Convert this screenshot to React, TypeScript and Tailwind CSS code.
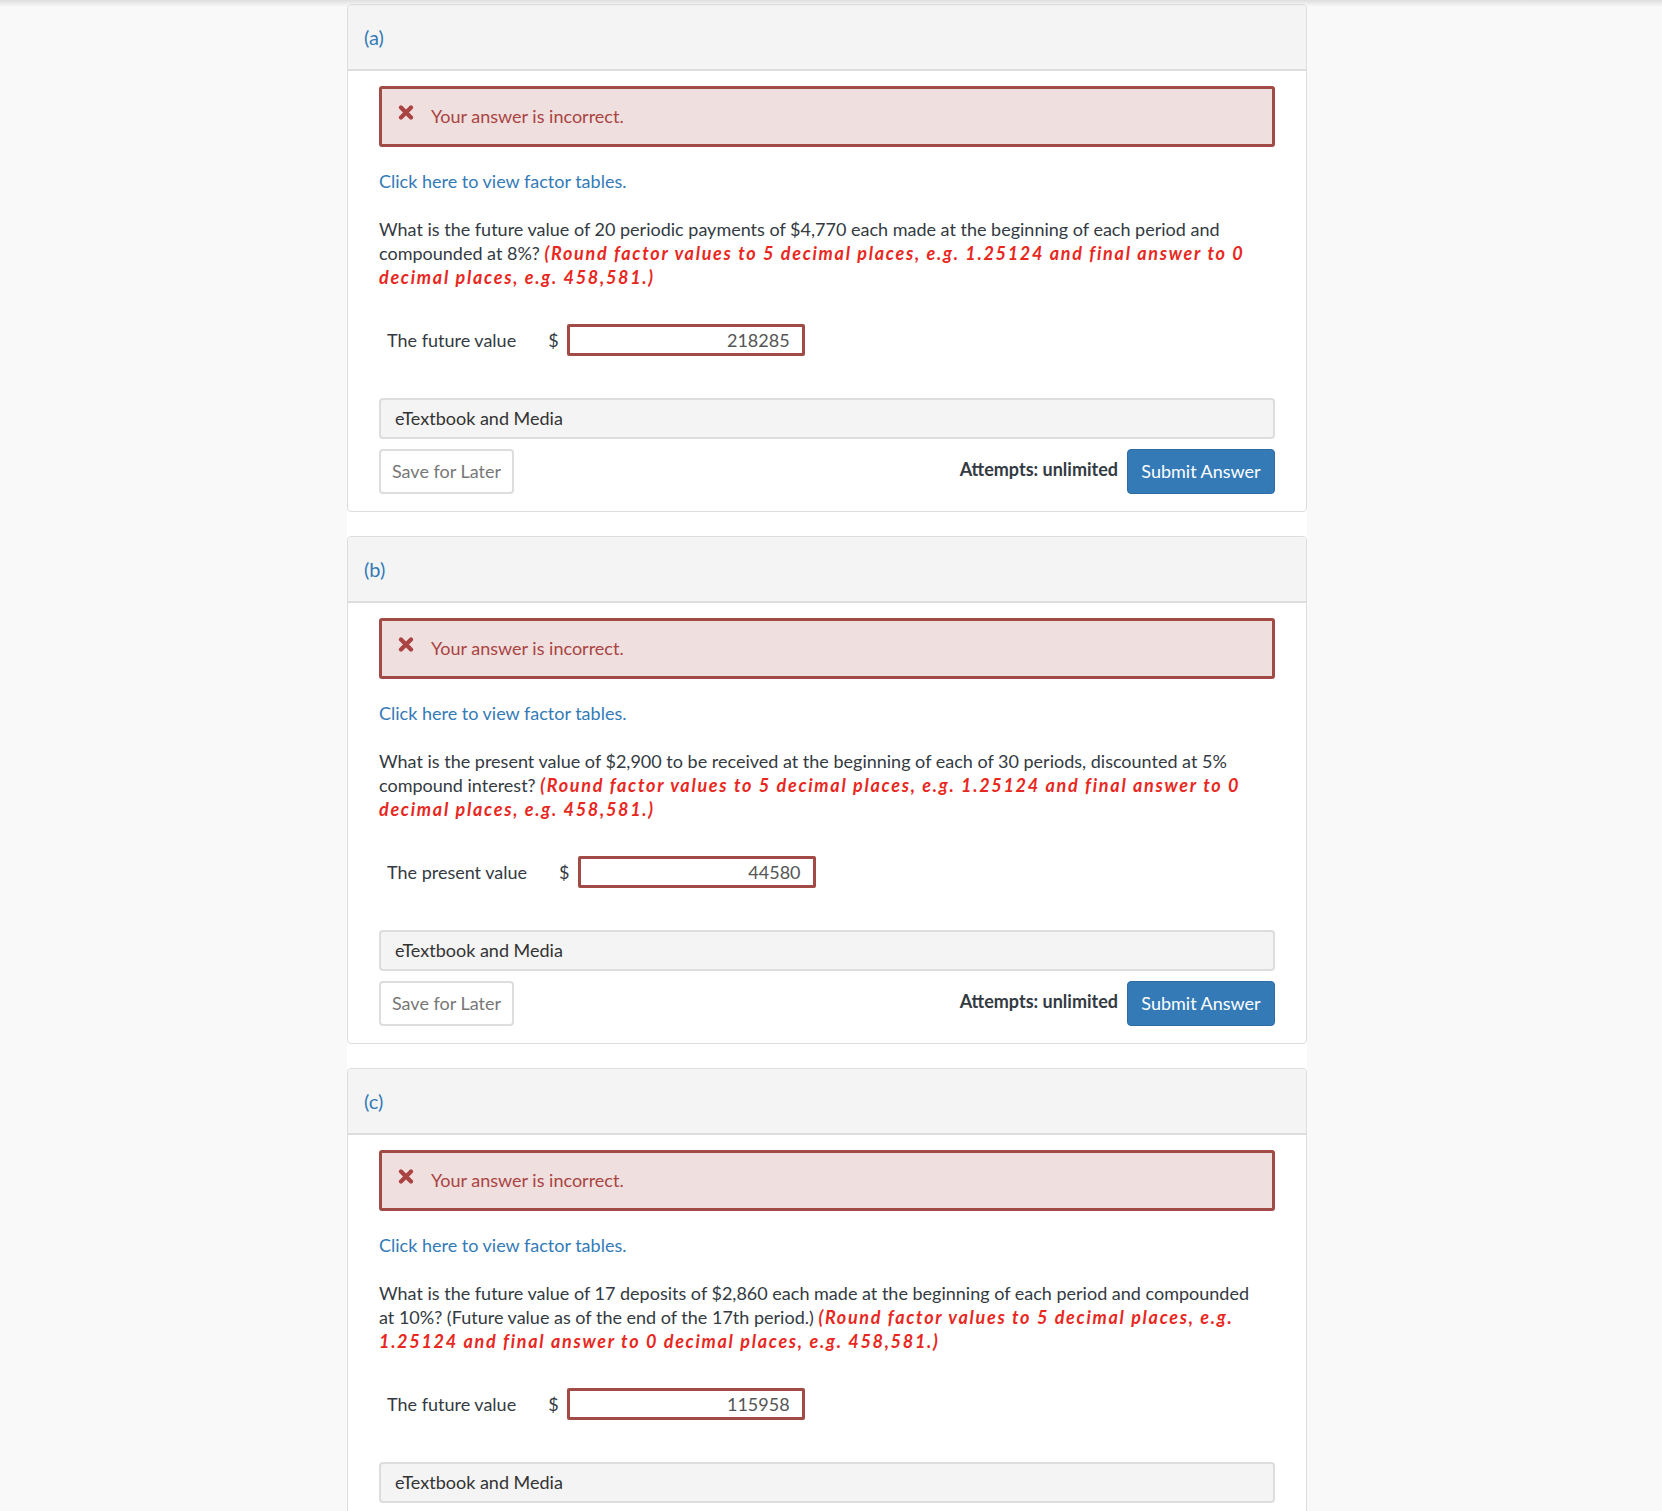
import React from "react";

type Part = {
    label: string;
    question: string;
    hint: string;
    answerLabel: string;
    value: string;
};

const parts: Part[] = [
    {
        label: "(a)",
        question:
            "What is the future value of 20 periodic payments of $4,770 each made at the beginning of each period and compounded at 8%?",
        hint: "(Round factor values to 5 decimal places, e.g. 1.25124 and final answer to 0 decimal places, e.g. 458,581.)",
        answerLabel: "The future value",
        value: "218285",
    },
    {
        label: "(b)",
        question:
            "What is the present value of $2,900 to be received at the beginning of each of 30 periods, discounted at 5% compound interest?",
        hint: "(Round factor values to 5 decimal places, e.g. 1.25124 and final answer to 0 decimal places, e.g. 458,581.)",
        answerLabel: "The present value",
        value: "44580",
    },
    {
        label: "(c)",
        question:
            "What is the future value of 17 deposits of $2,860 each made at the beginning of each period and compounded at 10%? (Future value as of the end of the 17th period.)",
        hint: "(Round factor values to 5 decimal places, e.g. 1.25124 and final answer to 0 decimal places, e.g. 458,581.)",
        answerLabel: "The future value",
        value: "115958",
    },
];

function CrossIcon() {
    return (
        <svg width="16" height="15" viewBox="0 0 16 15" className="shrink-0">
            <path d="M3 2.5 L13 12.5 M13 2.5 L3 12.5" stroke="#a94442" strokeWidth="4.2" strokeLinecap="round"/>
        </svg>
    );
}

function PartCard({part}: { part: Part }) {
    return (
        <div className="w-[960px] bg-white border border-[#dddddd] rounded-[4px]">
            {/* header */}
            <div className="h-[66px] bg-[#f4f4f4] border-b-2 border-[#dddddd] rounded-t-[4px] flex items-center pl-[16px]">
                <span className="text-[20px] text-[#337ab7]">{part.label}</span>
            </div>

            <div className="px-[31px] pt-[15px] pb-[17px]">
                {/* feedback */}
                <div className="h-[61px] bg-[#f0dfdf] border-[3px] border-[#a24a45] rounded-[3px] flex items-center pl-[16px] gap-[17px]">
                    <div className="-mt-[8px]">
                        <CrossIcon/>
                    </div>
                    <span className="text-[18px] text-[#a94442]">Your answer is incorrect.</span>
                </div>

                <div className="mt-[22px] leading-[24px] text-[18px] text-[#337ab7]">
                    Click here to view factor tables.
                </div>

                <p className="mt-[24px] w-[872px] text-[18px] leading-[24px] text-[#333a42]">
                    {part.question}{" "}
                    <span className="font-bold italic text-[#e8281e] tracking-[1.7px]">{part.hint}</span>
                </p>

                {/* answer */}
                <div className="mt-[35px] flex items-center pl-[8px] text-[18px] text-[#333a42]">
                    <span>{part.answerLabel}</span>
                    <span className="ml-[32px]">$</span>
                    <div className="ml-[8px] w-[238px] h-[32px] border-[3px] border-[#a24a45] rounded-[2px] flex items-center justify-end pr-[12px] text-[#555555]">
                        {part.value}
                    </div>
                </div>

                <div className="mt-[42px] h-[41px] bg-[#f4f4f4] border-2 border-[#dddddd] rounded-[4px] flex items-center pl-[14px] text-[18px] text-[#333333]">
                    eTextbook and Media
                </div>

                <div className="mt-[10px] flex items-center justify-between">
                    <button
                        type="button"
                        className="h-[45px] w-[135px] border-2 border-[#dddddd] rounded-[4px] bg-white text-[18px] text-[#777777]"
                    >
                        Save for Later
                    </button>
                    <div className="flex items-center gap-[9px]">
                        <span className="text-[18px] font-bold text-[#333a42] -mt-[4px]">Attempts: unlimited</span>
                        <button
                            type="button"
                            className="h-[45px] w-[148px] bg-[#337ab7] border border-[#2e6da4] rounded-[4px] text-[18px] text-white"
                        >
                            Submit Answer
                        </button>
                    </div>
                </div>
            </div>
        </div>
    );
}

export default function App() {
    return (
        <div
            className="min-h-screen bg-[#f9f9f9] relative"
            style={{fontFamily: "Lato, 'Liberation Sans', sans-serif"}}
        >
            <div className="absolute top-0 left-0 right-0 h-[7px] bg-linear-to-b from-[#dedede] to-[#f9f9f900]"/>
            <div className="ml-[347px] w-[960px] bg-white pt-[4px] flex flex-col gap-[24px]">
                {parts.map((p) => (
                    <PartCard key={p.label} part={p}/>
                ))}
            </div>
        </div>
    );
}
